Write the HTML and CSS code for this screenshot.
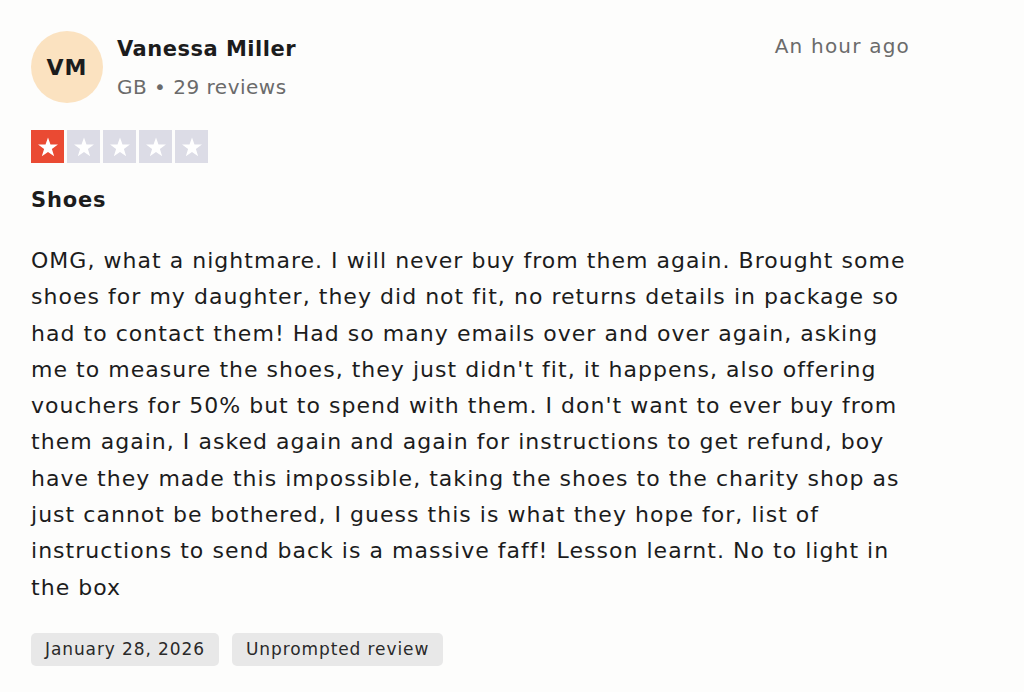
FILE: index.html
```html
<!DOCTYPE html>
<html lang="en">
<head>
<meta charset="utf-8">
<title>Review</title>
<link rel="stylesheet" href="styles.css">
</head>
<body>
<article class="review">
  <header class="review-head">
    <div class="avatar">VM</div>
    <div class="author">
      <div class="author-name">Vanessa Miller</div>
      <div class="author-meta">GB • 29 reviews</div>
    </div>
    <time class="review-time">An hour ago</time>
  </header>
  <div class="stars" aria-label="Rated 1 out of 5 stars">
    <span class="star star-on"><svg viewBox="0 0 24 24"><path d="M12 3.2l2.3 6.6h6.9l-5.6 4.1 2.1 6.7L12 16.5l-5.7 4.1 2.1-6.7-5.6-4.1h6.9z"/></svg></span>
    <span class="star"><svg viewBox="0 0 24 24"><path d="M12 3.2l2.3 6.6h6.9l-5.6 4.1 2.1 6.7L12 16.5l-5.7 4.1 2.1-6.7-5.6-4.1h6.9z"/></svg></span>
    <span class="star"><svg viewBox="0 0 24 24"><path d="M12 3.2l2.3 6.6h6.9l-5.6 4.1 2.1 6.7L12 16.5l-5.7 4.1 2.1-6.7-5.6-4.1h6.9z"/></svg></span>
    <span class="star"><svg viewBox="0 0 24 24"><path d="M12 3.2l2.3 6.6h6.9l-5.6 4.1 2.1 6.7L12 16.5l-5.7 4.1 2.1-6.7-5.6-4.1h6.9z"/></svg></span>
    <span class="star"><svg viewBox="0 0 24 24"><path d="M12 3.2l2.3 6.6h6.9l-5.6 4.1 2.1 6.7L12 16.5l-5.7 4.1 2.1-6.7-5.6-4.1h6.9z"/></svg></span>
  </div>
  <h2 class="review-title">Shoes</h2>
  <p class="review-body">OMG, what a nightmare. I will never buy from them again. Brought some shoes for my daughter, they did not fit, no returns details in package so had to contact them! Had so many emails over and over again, asking me to measure the shoes, they just didn't fit, it happens, also offering vouchers for 50% but to spend with them. I don't want to ever buy from them again, I asked again and again for instructions to get refund, boy have they made this impossible, taking the shoes to the charity shop as just cannot be bothered, I guess this is what they hope for, list of instructions to send back is a massive faff! Lesson learnt. No to light in the box</p>
  <div class="tags">
    <span class="tag">January 28, 2026</span>
    <span class="tag">Unprompted review</span>
  </div>
</article>
</body>
</html>
```

FILE: styles.css
```css
* { box-sizing: border-box; }
html, body { margin: 0; padding: 0; }
body {
  background: #fdfdfc;
  color: #1f1f1f;
  font-family: "DejaVu Sans", "Liberation Sans", sans-serif;
}
.review {
  width: 940px;
  padding: 31px 0 0 31px;
}
.review-head {
  display: flex;
  align-items: flex-start;
  width: 879px;
}
.avatar {
  width: 72px;
  height: 72px;
  border-radius: 50%;
  background: #fbe2c0;
  display: flex;
  align-items: center;
  justify-content: center;
  font-size: 22px;
  font-weight: 700;
  letter-spacing: 1px;
  color: #1c1c1c;
  flex-shrink: 0;
}
.author {
  margin-left: 14px;
  padding-top: 3px;
  flex: 1;
}
.author-name {
  font-size: 21px;
  font-weight: 700;
  letter-spacing: 0.5px;
  line-height: 30px;
  color: #1c1c1c;
}
.author-meta {
  font-size: 20px;
  letter-spacing: 0.5px;
  line-height: 30px;
  margin-top: 8px;
  color: #6b6b6b;
}
.review-time {
  font-size: 20px;
  letter-spacing: 1.2px;
  line-height: 30px;
  color: #6b6b6b;
}
.stars {
  display: flex;
  gap: 3px;
  margin-top: 27px;
}
.star {
  width: 33px;
  height: 33px;
  background: #dcdce6;
  display: flex;
  align-items: center;
  justify-content: center;
}
.star svg {
  width: 26px;
  height: 26px;
  fill: #fff;
}
.star-on { background: #ea4a33; }
.review-title {
  margin: 22px 0 0;
  font-size: 21px;
  font-weight: 700;
  letter-spacing: 0.8px;
  line-height: 30px;
  color: #1c1c1c;
}
.review-body {
  margin: 28px 0 0;
  width: 878px;
  font-size: 22px;
  letter-spacing: 1.03px;
  line-height: 36.3px;
  color: #1c1c1c;
}
.tags {
  display: flex;
  gap: 13px;
  margin-top: 27px;
}
.tag {
  background: #e8e8e8;
  border-radius: 5px;
  padding: 0 14px;
  height: 33px;
  display: flex;
  align-items: center;
  font-size: 17px;
  letter-spacing: 0.9px;
  color: #2a2a2a;
}
```
